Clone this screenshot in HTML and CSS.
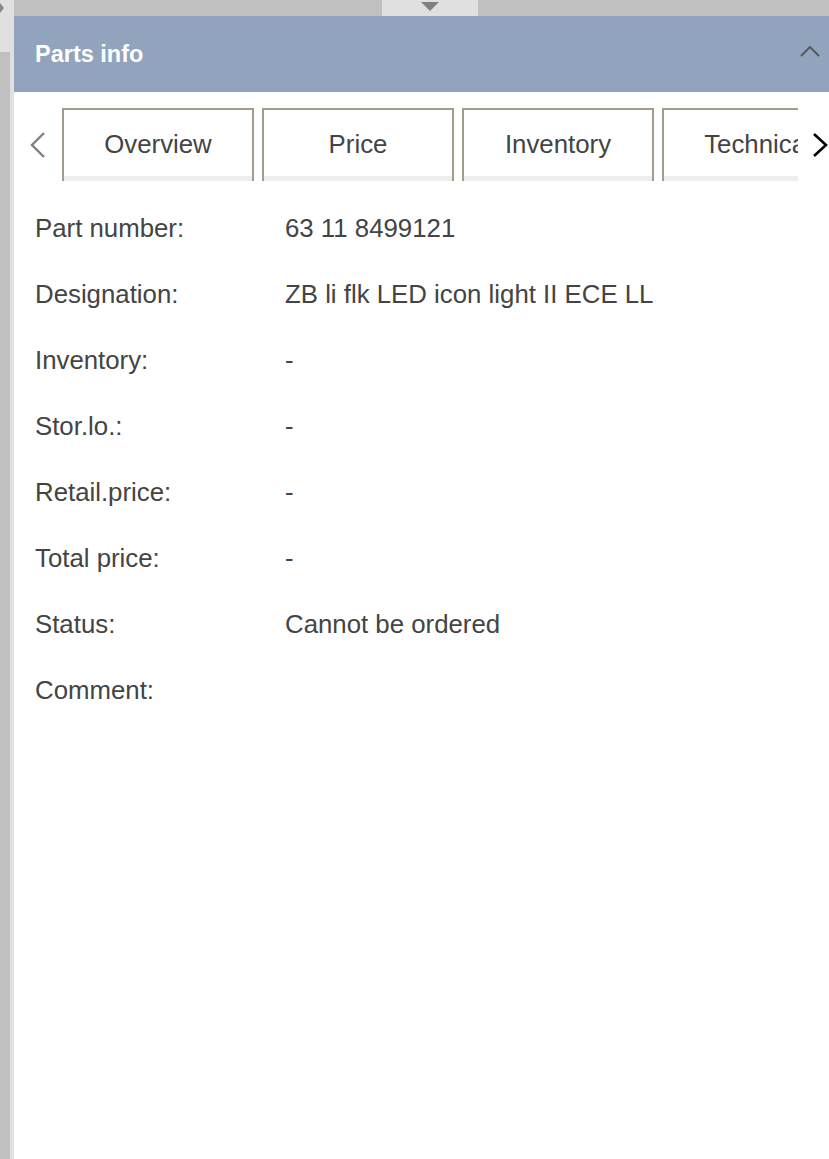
FILE: index.html
```html
<!DOCTYPE html>
<html lang="en">
<head>
  <meta charset="UTF-8">
  <title>Parts info</title>
  <link rel="stylesheet" href="styles.css">
</head>
<body>

  <div class="sidebar">
    <div class="sidebar-arrow"></div>
    <div class="sidebar-bar"></div>
  </div>

  <div class="main">
    <div class="top-bar">
      <div class="top-handle"><span class="handle-arrow"></span></div>
    </div>

    <div class="panel">
      <div class="panel-header">
        <h2>Parts info</h2>
        <svg class="collapse" width="20" height="12" viewBox="0 0 20 12">
          <polyline points="1,11 10,2 19,11" fill="none" stroke="#555" stroke-width="1.8"/>
        </svg>
      </div>

      <div class="tab-row">
        <div class="tab-nav">
          <svg width="18" height="28" viewBox="0 0 18 28">
            <polyline points="15,2 3,14 15,26" fill="none" stroke="#7f7f7f" stroke-width="2.4"/>
          </svg>
        </div>
        <div class="tabs">
          <div class="tab">Overview</div>
          <div class="tab">Price</div>
          <div class="tab">Inventory</div>
          <div class="tab">Technical</div>
        </div>
        <div class="tab-nav right">
          <svg width="18" height="26" viewBox="0 0 18 26">
            <polyline points="3,2 15,13 3,24" fill="none" stroke="#000" stroke-width="2.6"/>
          </svg>
        </div>
      </div>

      <div class="details">
        <div class="label">Part number:</div><div class="value">63 11 8499121</div>
        <div class="label">Designation:</div><div class="value">ZB li flk LED icon light II ECE LL</div>
        <div class="label">Inventory:</div><div class="value">-</div>
        <div class="label">Stor.lo.:</div><div class="value">-</div>
        <div class="label">Retail.price:</div><div class="value">-</div>
        <div class="label">Total price:</div><div class="value">-</div>
        <div class="label">Status:</div><div class="value">Cannot be ordered</div>
        <div class="label">Comment:</div><div class="value"></div>
      </div>
    </div>
  </div>

</body>
</html>
```

FILE: styles.css
```css
body {
  margin: 0;
  font-family: "Liberation Sans", Arial, sans-serif;
  background: white;
  display: flex;
  min-height: 100vh;
  overflow: hidden;
}

/* Left edge strip */
.sidebar {
  width: 14px;
  flex-shrink: 0;
  background: #e0e0e0;
  position: relative;
}

.sidebar-arrow {
  position: absolute;
  top: 3px;
  left: 0;
  border-top: 5px solid transparent;
  border-bottom: 5px solid transparent;
  border-left: 4px solid #8a8a8a;
}

.sidebar-bar {
  margin-top: 52px;
  width: 10px;
  height: calc(100% - 52px);
  background: #c0c0c0;
}

.main {
  flex: 1;
  min-width: 0;
  display: flex;
  flex-direction: column;
}

.top-bar {
  height: 16px;
  background: #c0c0c0;
}

.top-handle {
  margin-left: 368px;
  width: 96px;
  height: 16px;
  background: #e0e0e0;
  display: flex;
  justify-content: center;
}

.handle-arrow {
  margin-top: 2px;
  border-left: 9px solid transparent;
  border-right: 9px solid transparent;
  border-top: 9px solid #808080;
  height: 0;
}

/* Panel */
.panel {
  flex: 1;
  background: white;
}

.panel-header {
  height: 76px;
  background: #91a3bd;
  display: flex;
  align-items: center;
  justify-content: space-between;
  padding: 0 9px 0 21px;
}

.panel-header h2 {
  margin: 0;
  color: white;
  font-size: 23.5px;
  font-weight: bold;
}

.collapse {
  margin-top: -6px;
}

.tab-row {
  display: flex;
  margin-top: 16px;
  height: 73px;
}

.tab-nav {
  width: 48px;
  flex-shrink: 0;
  display: flex;
  align-items: center;
  padding-left: 15px;
  box-sizing: border-box;
}

.tab-nav.right {
  width: 31px;
  padding-left: 13px;
}

.tabs {
  flex: 1;
  min-width: 0;
  display: flex;
  gap: 8px;
  overflow: hidden;
}

.tab {
  flex-shrink: 0;
  width: 188px;
  border: 2px solid #a59d8b;
  border-bottom: none;
  box-shadow: inset 0 -5px 0 #eeeeee;
  display: flex;
  align-items: center;
  justify-content: center;
  padding-bottom: 3px;
  font-size: 25.8px;
  color: #444;
  white-space: nowrap;
}

/* Details list */
.details {
  display: grid;
  grid-template-columns: 250px 1fr;
  padding: 14px 21px 0;
  font-size: 25.8px;
  color: #444;
}

.label, .value {
  line-height: 66px;
}
```
